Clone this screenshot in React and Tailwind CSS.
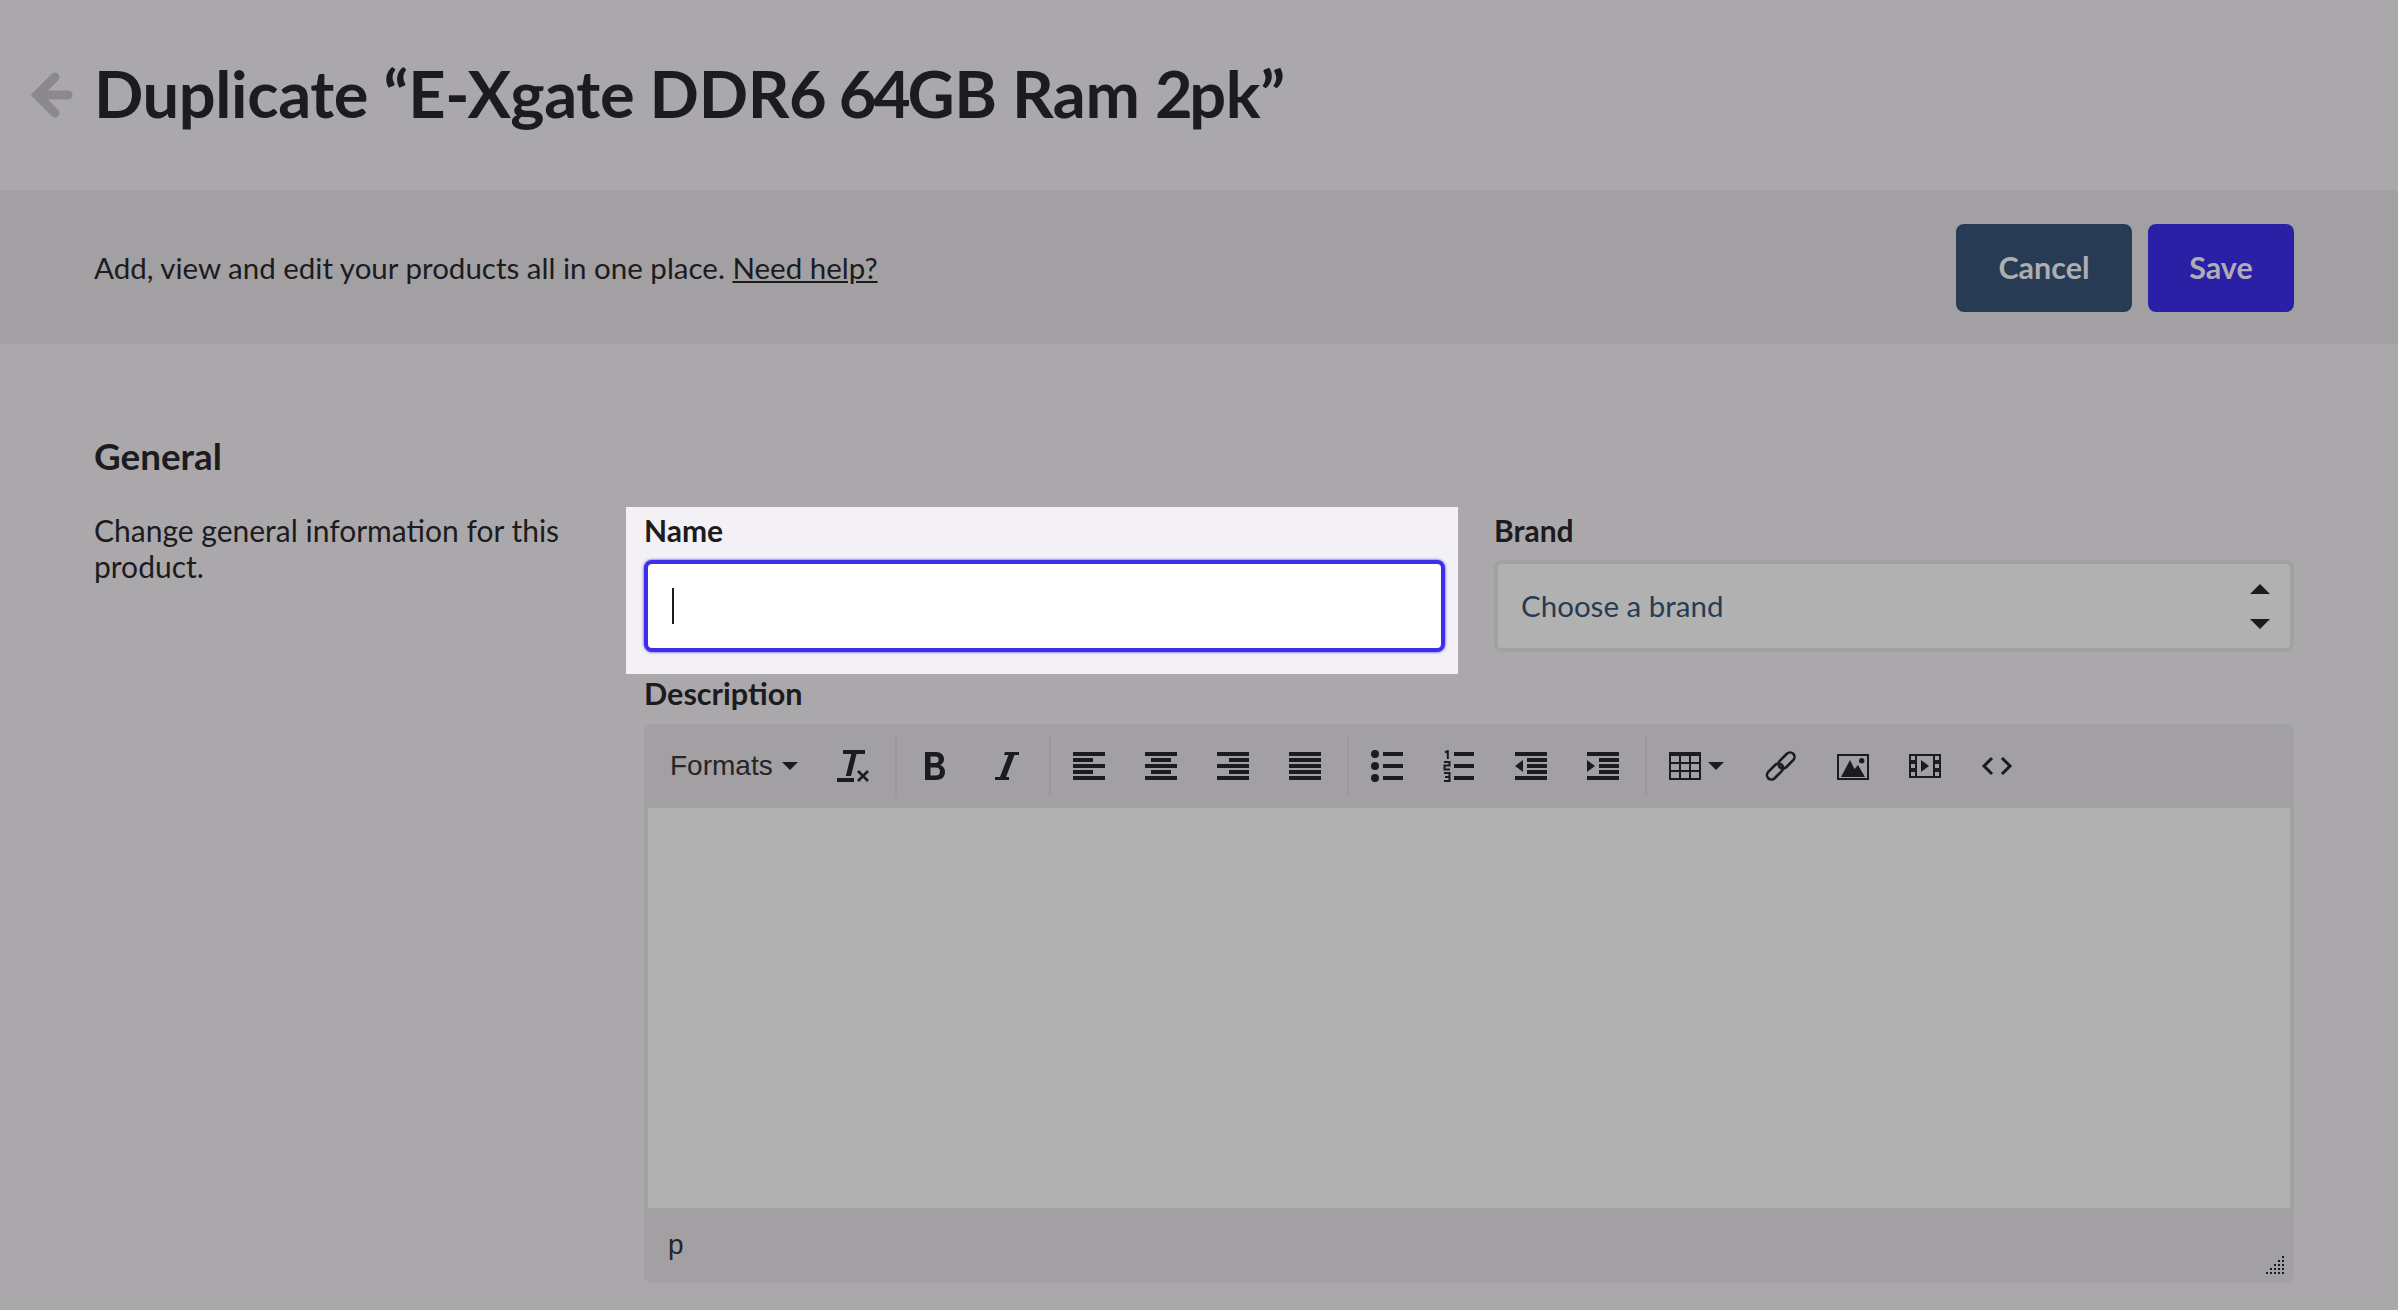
const FILL = "#1c1b1e";

function Icon({ children, className = "w-8 h-8" }) {
  return (
    <svg viewBox="0 0 32 32" className={className} fill={FILL} aria-hidden="true">
      {children}
    </svg>
  );
}

function Btn({ children }) {
  return <div className="flex h-full w-[72px] shrink-0 items-center justify-center">{children}</div>;
}

function Sep({ className = "" }) {
  return <div className={`h-[60px] w-[2px] shrink-0 bg-[#9a989b] ${className}`} />;
}

function Caret() {
  return (
    <svg viewBox="0 0 16 8" className="h-2 w-4 shrink-0" fill={FILL} aria-hidden="true">
      <path d="M0 0H16L8 8Z" />
    </svg>
  );
}

const Bars = ({ rows }) => rows.map(([x, y, w], i) => <rect key={i} x={x} y={y} width={w} height="4" />);

const ALIGN_LEFT = [[0, 2, 32], [0, 8, 20], [0, 14, 32], [0, 20, 20], [0, 26, 32]];
const ALIGN_CENTER = [[0, 2, 32], [6, 8, 20], [0, 14, 32], [6, 20, 20], [0, 26, 32]];
const ALIGN_RIGHT = [[0, 2, 32], [12, 8, 20], [0, 14, 32], [12, 20, 20], [0, 26, 32]];
const JUSTIFY = [[0, 2, 32], [0, 8, 32], [0, 14, 32], [0, 20, 32], [0, 26, 32]];
const INDENT = [[0, 2, 32], [12, 8, 20], [12, 14, 20], [12, 20, 20], [0, 26, 32]];

function Toolbar() {
  return (
    <div className="flex h-[84px] items-center pl-[26px] text-[#1c1b1e]">
      <div className="flex w-[128px] shrink-0 items-center justify-between font-['Liberation_Sans',Arial,sans-serif] text-[28px] leading-none text-[#262528]">
        <span>Formats</span>
        <Caret />
      </div>
      <div className="ml-[19px] flex h-full">
        <Btn>
          <Icon>
            <path d="M6 0H28V4H19.5L14 26H8.8L14.3 4H6Z" />
            <rect x="0" y="28" width="17" height="4" />
            <path d="M21 21L31 31M31 21L21 31" stroke={FILL} strokeWidth="2.6" fill="none" />
          </Icon>
        </Btn>
      </div>
      <Sep className="ml-[6px]" />
      <div className="ml-[2px] flex h-full">
        <Btn>
          <Icon>
            <path
              fillRule="evenodd"
              d="M6 2H17C22 2 25 5 25 9C25 12 23.500 14 21 15C24 16 26 18.500 26 22C26 27 22.500 30 17 30H6ZM11.500 6.500V13H16C18.500 13 19.700 11.700 19.700 9.700C19.700 7.700 18.500 6.500 16 6.500ZM11.500 17.500V25.500H16.500C19.500 25.500 21 24 21 21.500C21 19 19.500 17.500 16.500 17.500Z"
            />
          </Icon>
        </Btn>
        <Btn>
          <Icon>
            <path d="M14 2H28V5H23.500L15 27H18V30H4V27H9L17.500 5H13Z" />
          </Icon>
        </Btn>
      </div>
      <Sep className="ml-[6px]" />
      <div className="ml-[2px] flex h-full">
        <Btn><Icon><Bars rows={ALIGN_LEFT} /></Icon></Btn>
        <Btn><Icon><Bars rows={ALIGN_CENTER} /></Icon></Btn>
        <Btn><Icon><Bars rows={ALIGN_RIGHT} /></Icon></Btn>
        <Btn><Icon><Bars rows={JUSTIFY} /></Icon></Btn>
      </div>
      <Sep className="ml-[6px]" />
      <div className="ml-[2px] flex h-full">
        <Btn>
          <Icon>
            <circle cx="4" cy="4" r="4" />
            <circle cx="4" cy="16" r="4" />
            <circle cx="4" cy="28" r="4" />
            <rect x="12" y="2" width="20" height="4" />
            <rect x="12" y="14" width="20" height="4" />
            <rect x="12" y="26" width="20" height="4" />
          </Icon>
        </Btn>
        <Btn>
          <Icon>
            <path d="M2 2.500L4.800 1V9" stroke={FILL} strokeWidth="2" fill="none" />
            <path d="M1 12H6.500V15.500H1.500V19.500H7" stroke={FILL} strokeWidth="2" fill="none" />
            <path d="M1 23H6.500V31H1M2 27H6.500" stroke={FILL} strokeWidth="2" fill="none" />
            <rect x="11" y="2" width="20" height="4" />
            <rect x="11" y="14" width="20" height="4" />
            <rect x="11" y="26" width="20" height="4" />
          </Icon>
        </Btn>
        <Btn>
          <Icon>
            <Bars rows={INDENT} />
            <path d="M8 10V22L0 16Z" />
          </Icon>
        </Btn>
        <Btn>
          <Icon>
            <Bars rows={INDENT} />
            <path d="M0 10V22L8 16Z" />
          </Icon>
        </Btn>
      </div>
      <Sep className="ml-[6px]" />
      <div className="ml-[22px] flex shrink-0 items-center gap-[7px]">
        <Icon>
          <path
            fillRule="evenodd"
            d="M0 2H32V30H0ZM2 6V12H10V6ZM12 6V12H20V6ZM22 6V12H30V6ZM2 14V20H10V14ZM12 14V20H20V14ZM22 14V20H30V14ZM2 22V28H10V22ZM12 22V28H20V22ZM22 22V28H30V22Z"
          />
        </Icon>
        <Caret />
      </div>
      <div className="ml-[21px] flex h-full">
        <Btn>
          <svg viewBox="0 0 32 32" className="h-8 w-8" fill="none" stroke={FILL} strokeWidth="2.6" aria-hidden="true">
            <rect x="12" y="6" width="19" height="9" rx="4.500" transform="rotate(-45 21.500 10.500)" />
            <rect x="0.500" y="17" width="19" height="9" rx="4.500" transform="rotate(-45 10 21.500)" />
          </svg>
        </Btn>
        <Btn>
          <Icon>
            <path fillRule="evenodd" d="M0 4H32V30H0ZM2 6V28H30V6Z" />
            <path d="M4 27L13 10L17.500 19L21 15L28 27Z" />
            <circle cx="24.700" cy="10.700" r="2.700" />
          </Icon>
        </Btn>
        <Btn>
          <Icon>
            <path
              fillRule="evenodd"
              d="M0 4H32V28H0ZM2 6V10H6V6ZM2 14V18H6V14ZM2 22V26H6V22ZM26 6V10H30V6ZM26 14V18H30V14ZM26 22V26H30V22ZM8 6V26H24V6Z"
            />
            <path d="M12 10V22L20 16Z" />
          </Icon>
        </Btn>
        <Btn>
          <svg viewBox="0 0 32 32" className="h-8 w-8" fill="none" stroke={FILL} strokeWidth="3" aria-hidden="true">
            <path d="M11 8L3 16L11 24M21 8L29 16L21 24" />
          </svg>
        </Btn>
      </div>
    </div>
  );
}

function Grip() {
  const dots = [];
  for (let row = 0; row < 5; row++) {
    for (let col = 4 - row; col < 5; col++) {
      dots.push(<rect key={`${row}-${col}`} x={col * 4} y={row * 4} width="2" height="2" />);
    }
  }
  return (
    <svg viewBox="0 0 18 18" className="h-[18px] w-[18px]" fill={FILL} aria-hidden="true">
      {dots}
    </svg>
  );
}

export default function App() {
  return (
    <div className="h-[1310px] overflow-hidden bg-[#aaa8ab] font-['Lato','Liberation_Sans',sans-serif] text-[#1c1b1e]">
      <header className="flex h-[190px] items-center pl-[31px]">
        <svg viewBox="0 0 42 46" className="h-[46px] w-[42px] shrink-0" fill="none" stroke="#8b898c" strokeWidth="9" strokeLinecap="round" strokeLinejoin="miter" aria-hidden="true">
          <path d="M37 23H8M24 5L6 23L24 41" />
        </svg>
        <h1 className="mb-[3px] ml-[21px] whitespace-nowrap text-[65px] font-bold leading-none tracking-[-0.4px]">
          Duplicate “E-Xgate DDR<span className="tracking-[-3.4px]">6</span> <span className="tracking-[-3.4px]">64</span>GB Ram <span className="tracking-[-3.4px]">2</span>pk”
        </h1>
      </header>

      <div className="flex h-[154px] items-center justify-between bg-[#a2a0a3] pl-[94px] pr-[104px] pt-[2px]">
        <p className="text-[29.5px] leading-none">
          Add, view and edit your products all in one place. <span className="underline">Need help?</span>
        </p>
        <div className="flex gap-4">
          <button className="flex h-[88px] w-[176px] items-center justify-center rounded-lg bg-[#273b55] text-[30.5px] font-bold text-[#aeadb0]">
            Cancel
          </button>
          <button className="flex h-[88px] w-[146px] items-center justify-center rounded-lg bg-[#2a20a5] text-[30.5px] font-bold text-[#aeadb0]">
            Save
          </button>
        </div>
      </div>

      <main className="pl-[94px] pr-[104px] pt-[88px]">
        <h2 className="mb-[27px] h-12 text-[36.8px] font-bold leading-[48px]">General</h2>
        <div className="flex">
          <p className="w-[550px] shrink-0 pr-[60px] pt-[5px] text-[30px] leading-[36px]">
            Change general information for this product.
          </p>
          <div className="min-w-0 flex-1">
            <div className="grid grid-cols-[801px_800px] gap-x-[49px]">
              <div className="-ml-[18px] -mr-[13px] bg-[#f3f1f5] pb-[22px] pl-[18px] pr-[13px] pt-[5px]">
                <label className="mb-[12px] block h-9 text-[30px] font-bold leading-9">Name</label>
                <div className="flex h-[92px] items-center rounded-lg border-4 border-[#3d2eea] bg-white pl-[24px] shadow-[0_0_3px_#3d2eea]">
                  <div className="h-9 w-[2px] bg-[#1c1b1e]" />
                </div>
              </div>
              <div className="pt-[5px]">
                <label className="mb-[12px] block h-9 text-[30px] font-bold leading-9">Brand</label>
                <div className="flex h-[92px] items-center justify-between rounded-lg border-4 border-[#a2a0a3] bg-[#b1b1b1] pl-[23px] pr-[20px]">
                  <span className="text-[29.5px] leading-none text-[#273b55]">Choose a brand</span>
                  <div className="flex flex-col gap-[25px]">
                    <svg viewBox="0 0 20 10" className="h-[10px] w-5" fill={FILL} aria-hidden="true"><path d="M10 0L20 10H0Z" /></svg>
                    <svg viewBox="0 0 20 10" className="h-[10px] w-5" fill={FILL} aria-hidden="true"><path d="M0 0H20L10 10Z" /></svg>
                  </div>
                </div>
              </div>
            </div>
            <label className="mb-[12px] mt-[2px] block h-9 text-[30.6px] font-bold leading-9">Description</label>
            <div className="rounded-lg bg-[#a2a0a3]">
              <Toolbar />
              <div className="mx-1 h-[400px] bg-[#b1b1b1]" />
              <div className="flex h-[75px] items-end justify-between pb-[9px] pr-[10px]">
                <span className="mb-[15px] pl-[24px] font-['Liberation_Sans',Arial,sans-serif] text-[28px] leading-none text-[#262528]">p</span>
                <Grip />
              </div>
            </div>
          </div>
        </div>
      </main>
    </div>
  );
}
